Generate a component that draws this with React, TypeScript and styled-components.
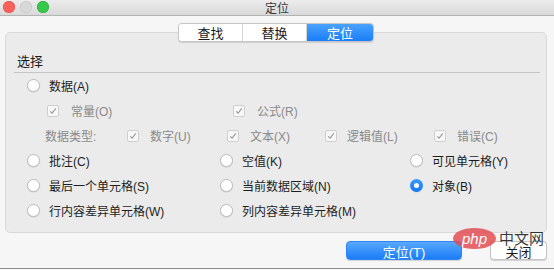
import React, { useState } from 'react';
import styled, { createGlobalStyle } from 'styled-components';

const GlobalStyle = createGlobalStyle`
  html, body {
    margin: 0;
    padding: 0;
    background: #f6f6f6;
  }
  body {
    font-family: "Liberation Sans", "Noto Sans CJK SC", sans-serif;
    font-size: 12px;
    color: #1d1d1d;
  }
  * {
    box-sizing: border-box;
  }
`;

const Window = styled.div`
  width: 554px;
  height: 269px;
  display: flex;
  flex-direction: column;
  background: #f6f6f6;
  border-bottom: 1px solid #8f8f8f;
  overflow: hidden;
`;

const TitleBar = styled.div`
  position: relative;
  height: 16px;
  flex: none;
  display: flex;
  align-items: center;
  justify-content: center;
  background: linear-gradient(#ececec, #d9d9d9);
  border-bottom: 1px solid #b3b3b3;
  font-size: 12px;
  color: #3a3a3a;
`;

const Lights = styled.div`
  position: absolute;
  left: 3px;
  top: 1px;
  display: flex;
  gap: 5px;
`;

const Light = styled.span<{ $c: string; $b: string }>`
  width: 12px;
  height: 12px;
  border-radius: 50%;
  background: ${(p) => p.$c};
  box-shadow: inset 0 0 0 0.5px ${(p) => p.$b};
`;

const Body = styled.div`
  flex: 1;
  display: flex;
  flex-direction: column;
  padding: 7px 7px 0 5px;
`;

const TabRow = styled.div`
  display: flex;
  justify-content: center;
  position: relative;
  z-index: 1;
`;

const Segmented = styled.div`
  display: flex;
  height: 19px;
  border: 1px solid #c6c6c6;
  border-radius: 4px;
  background: #fff;
  box-shadow: 0 0.5px 1px rgba(0, 0, 0, 0.12);
  overflow: hidden;
`;

const Tab = styled.div<{ $active?: boolean; $w: number }>`
  width: ${(p) => p.$w}px;
  display: flex;
  align-items: center;
  justify-content: center;
  font-size: 13px;
  color: ${(p) => (p.$active ? '#fff' : '#1a1a1a')};
  background: ${(p) => (p.$active ? 'linear-gradient(#4aa2fd, #1a7ef8)' : '#fff')};
  & + & {
    border-left: 1px solid #d4d4d4;
  }
`;

const Panel = styled.div`
  margin-top: -10px;
  height: 201px;
  background: #ebebeb;
  border: 1px solid #d9d9d9;
  border-radius: 5px;
  padding: 21px 6px 0 8px;
`;

const Header = styled.div`
  height: 19px;
  line-height: 16px;
  padding: 0 0 2px 3px;
  border-bottom: 1px solid #c4c4c4;
  font-size: 13px;
  color: #1a1a1a;
`;

const Rows = styled.div`
  display: flex;
  flex-direction: column;
  padding-left: 13px;
`;

const Row = styled.div<{ $indent?: number }>`
  height: 25px;
  display: flex;
  align-items: center;
  padding-left: ${(p) => p.$indent || 0}px;
`;

const Cell = styled.label<{ $w?: number; $disabled?: boolean; $gap?: number }>`
  display: flex;
  align-items: center;
  gap: ${(p) => p.$gap || 9}px;
  width: ${(p) => (p.$w ? `${p.$w}px` : 'auto')};
  flex: none;
  color: ${(p) => (p.$disabled ? '#8a8a8a' : '#1d1d1d')};
  font-size: 12px;
  white-space: nowrap;
`;

const RadioDot = styled.span<{ $on?: boolean }>`
  width: 13px;
  height: 13px;
  border-radius: 50%;
  flex: none;
  display: flex;
  align-items: center;
  justify-content: center;
  background: ${(p) => (p.$on ? 'linear-gradient(#3e9bfd, #1078f6)' : '#fff')};
  border: ${(p) => (p.$on ? 'none' : '1px solid #bdbdbd')};
  box-shadow: 0 0.5px 1px rgba(0, 0, 0, 0.15);
  &::after {
    content: '';
    display: ${(p) => (p.$on ? 'block' : 'none')};
    width: 5px;
    height: 5px;
    border-radius: 50%;
    background: #fff;
  }
`;

const Check = styled.span`
  width: 12px;
  height: 12px;
  flex: none;
  border: 1px solid #cfcfcf;
  border-radius: 2px;
  background: #f7f7f7;
  display: flex;
  align-items: center;
  justify-content: center;
`;

const TypeLabel = styled.span`
  width: 82px;
  flex: none;
  color: #8a8a8a;
  font-size: 12px;
`;

const Footer = styled.div`
  position: relative;
  display: flex;
  justify-content: flex-end;
  gap: 28px;
  margin-top: 8px;
`;

const Button = styled.button<{ $primary?: boolean; $w: number }>`
  width: ${(p) => p.$w}px;
  height: 19px;
  padding: 0;
  font-family: inherit;
  font-size: 13px;
  border-radius: 4px;
  color: ${(p) => (p.$primary ? '#fff' : '#1a1a1a')};
  background: ${(p) => (p.$primary ? 'linear-gradient(#58a9fd, #1a7cf7)' : '#fff')};
  border: 1px solid ${(p) => (p.$primary ? '#2f86f3' : '#c4c4c4')};
  box-shadow: 0 0.5px 1px rgba(0, 0, 0, 0.15);
`;

const Watermark = styled.div`
  position: absolute;
  right: 3px;
  top: -14px;
  display: flex;
  align-items: center;
  gap: 3px;
  pointer-events: none;
`;

const PhpOval = styled.span`
  width: 43px;
  height: 21px;
  border-radius: 50%;
  background: rgba(226, 72, 78, 0.82);
  color: #fff;
  font-style: italic;
  font-size: 15px;
  display: flex;
  align-items: center;
  justify-content: center;
`;

const PhpText = styled.span`
  font-size: 15px;
  color: rgba(20, 20, 20, 0.85);
  margin-bottom: 1px;
`;

const Tick = () => (
  <svg width="8" height="8" viewBox="0 0 8 8">
    <path d="M1.2 4.3 L3.1 6.2 L6.8 1.4" fill="none" stroke="#9a9a9a" strokeWidth="1.1" />
  </svg>
);

const Radio = ({ label, on, w, onPick }: { label: string; on?: boolean; w?: number; onPick: () => void }) => (
  <Cell $w={w} onClick={onPick}>
    <RadioDot $on={on} />
    {label}
  </Cell>
);

const Box = ({ label, w, gap }: { label: string; w?: number; gap?: number }) => (
  <Cell $w={w} $disabled $gap={gap}>
    <Check>
      <Tick />
    </Check>
    {label}
  </Cell>
);

const App = () => {
  const [pick, setPick] = useState('B');
  const tabs = [
    { label: '查找', w: 63 },
    { label: '替换', w: 64 },
    { label: '定位', w: 67 },
  ];
  const grid = [
    [
      ['C', '批注(C)'],
      ['K', '空值(K)'],
      ['Y', '可见单元格(Y)'],
    ],
    [
      ['S', '最后一个单元格(S)'],
      ['N', '当前数据区域(N)'],
      ['B', '对象(B)'],
    ],
    [
      ['W', '行内容差异单元格(W)'],
      ['M', '列内容差异单元格(M)'],
    ],
  ];

  return (
    <>
      <GlobalStyle />
      <Window>
        <TitleBar>
          <Lights>
            <Light $c="#fc605c" $b="#de4a45" />
            <Light $c="#d8d8d8" $b="#c2c2c2" />
            <Light $c="#35c84a" $b="#25a83a" />
          </Lights>
          定位
        </TitleBar>
        <Body>
          <TabRow>
            <Segmented>
              {tabs.map((t) => (
                <Tab key={t.label} $w={t.w} $active={t.label === '定位'}>
                  {t.label}
                </Tab>
              ))}
            </Segmented>
          </TabRow>
          <Panel>
            <Header>选择</Header>
            <Rows>
              <Row>
                <Radio label="数据(A)" on={pick === 'A'} onPick={() => setPick('A')} />
              </Row>
              <Row $indent={20}>
                <Box label="常量(O)" w={186} gap={12} />
                <Box label="公式(R)" gap={12} />
              </Row>
              <Row $indent={18}>
                <TypeLabel>数据类型:</TypeLabel>
                <Box label="数字(U)" w={100} gap={11} />
                <Box label="文本(X)" w={98} gap={11} />
                <Box label="逻辑值(L)" w={109} gap={10} />
                <Box label="错误(C)" gap={11} />
              </Row>
              {grid.map((row, i) => (
                <Row key={i}>
                  {row.map(([k, label], j) => (
                    <Radio
                      key={k}
                      label={label}
                      w={j === 0 ? 193 : 190}
                      on={pick === k}
                      onPick={() => setPick(k)}
                    />
                  ))}
                </Row>
              ))}
            </Rows>
          </Panel>
          <Footer>
            <Button $primary $w={116}>定位(T)</Button>
            <Button $w={57}>关闭</Button>
            <Watermark>
              <PhpOval>php</PhpOval>
              <PhpText>中文网</PhpText>
            </Watermark>
          </Footer>
        </Body>
      </Window>
    </>
  );
};

export default App;
